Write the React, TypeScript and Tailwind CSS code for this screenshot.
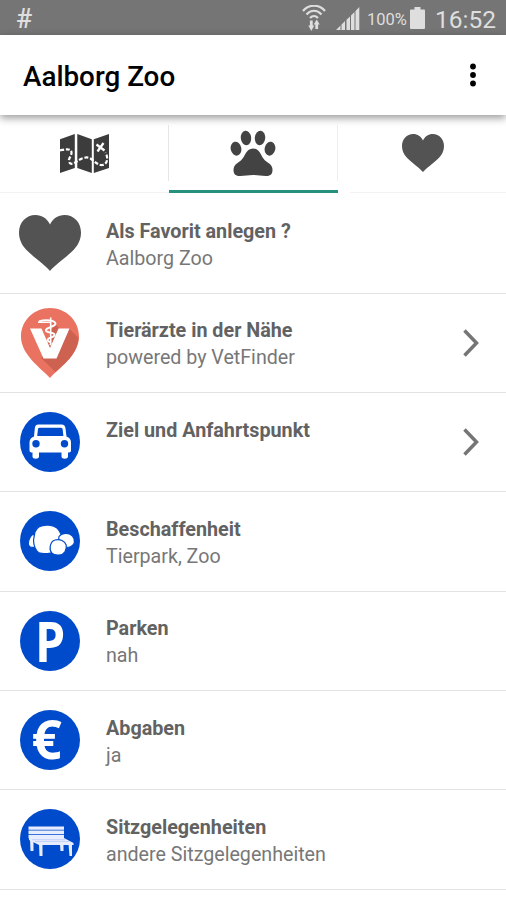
import type { ReactNode } from 'react';

type Row = {
  title: string;
  subtitle?: string;
  icon: ReactNode;
  chevron?: boolean;
};

function Heart({ className }: { className: string }) {
  return (
    <svg className={className} viewBox="0 0 62 56" preserveAspectRatio="none" fill="currentColor" aria-hidden="true">
      <path d="M31 56C27 51 14.500 42 7 34.500C2.500 29.500 0 24 0 17.500C0 7.500 7 0 16.500 0C23 0 28 3.500 31 9.500C34 3.500 39 0 45.500 0C55 0 62 7.500 62 17.500C62 24 59.500 29.500 55 34.500C47.500 42 35 51 31 56Z" />
    </svg>
  );
}

function MapIcon() {
  return (
    <svg className="h-[39px] w-[49px]" viewBox="0 0 49 39" aria-hidden="true">
      <path
        fill="#3c3c3c"
        d="M0 5.200L14.800 0V34L0 39ZM17.300 0L31.800 5.200V39L17.300 34ZM33.800 5.200L49 0V34L33.800 39Z"
      />
      <path
        d="M0 16.300C5 15.500 10 14 11.300 17.500C12.500 21.500 8 24 9 27.500C10 31.500 14 29.500 17 27.300C21 24.500 26 22 30.500 24.500C35 27.500 38 31.500 42.500 31C47.500 30 48.500 24 45.500 18.500"
        fill="none"
        stroke="#fff"
        strokeWidth="2.200"
        strokeDasharray="4 1.800"
      />
      <path d="M36.500 10.500L44.500 16.500M43.500 9L37.500 17.500" stroke="#fff" strokeWidth="2.300" />
    </svg>
  );
}

function Paw() {
  return (
    <svg className="h-[47px] w-[46px]" viewBox="0 0 46 47" fill="#434343" aria-hidden="true">
      <ellipse cx="6" cy="18.700" rx="5.300" ry="7" transform="rotate(-12 6 18.700)" />
      <ellipse cx="16" cy="8" rx="5.200" ry="7.200" transform="rotate(-6 16 8)" />
      <ellipse cx="30" cy="8" rx="5.200" ry="7.200" transform="rotate(6 30 8)" />
      <ellipse cx="40" cy="18.700" rx="5.300" ry="7" transform="rotate(12 40 18.700)" />
      <path d="M23 18.500C26.500 18.500 29 20.500 31 24.500C33.500 29.500 35.500 31 38.500 33C41.500 35 42.500 37 42.500 40C42.500 44.500 40 46 36 46C31 46 28 45 23 45C18 45 15 46 10 46C6 46 3.500 44.500 3.500 40C3.500 37 4.500 35 7.500 33C10.500 31 12.500 29.500 15 24.500C17 20.500 19.500 18.500 23 18.500Z" />
    </svg>
  );
}

function VetPin() {
  return (
    <svg className="h-[70px] w-[58px]" viewBox="0 0 58 70" aria-hidden="true">
      <path fill="#ea7260" d="M29 70C20 60 0 47 0 28.500C0 12.500 13 0 29 0S58 12.500 58 28.500C58 47 38 60 29 70Z" />
      <path fill="#cd6251" d="M48 20.500L57.500 30C56 48 42 56.500 34.500 64L20 50L25 45L32 14L40 22Z" />
      <path fill="#fff" d="M9 20.500H20.500L29 40L37.500 20.500H48.500L35.500 50.500H22.500Z" />
      <path d="M17 14.200H29M29.700 9.500V34" fill="none" stroke="#fff" strokeWidth="1.600" />
      <path
        d="M18 13.500C23 11.500 31 11.500 34 14.500C37 18.500 23 19.500 25 23C27 25 35 24.500 33.500 27.500C31 30 25 30 27 33C29 34 31 34.500 29 37"
        fill="none"
        stroke="#fff"
        strokeWidth="1.900"
      />
    </svg>
  );
}

function BlueDisc({ children }: { children: ReactNode }) {
  return (
    <svg className="size-[60px] overflow-visible" viewBox="0 0 60 60" aria-hidden="true">
      <circle cx="30" cy="30" r="30" fill="#004bcb" />
      {children}
    </svg>
  );
}

function Car() {
  return (
    <BlueDisc>
      <path
        fill="#fff"
        fillRule="evenodd"
        d="M18.500 12.500H41.500C44 12.500 45.300 14 45.500 16.500L46.500 24.500C49.500 25.500 51 27.500 51 30.500V38.500C51 40 50 40.500 48 40.500V44.500C48 47.500 41.500 47.500 41.500 44.500V40.500H19V44.500C19 47.500 12.500 47.500 12.500 44.500V40.500C10.500 40.500 9.500 40 9.500 38.500V30.500C9.500 27.500 11 25.500 14 24.500L14.800 16.500C15 14 16 12.500 18.500 12.500ZM19.500 15.800C18.500 15.800 18 16.500 17.900 17.700L17.200 24H43.400L42.700 17.700C42.500 16.500 42 15.800 41 15.800Z"
      />
      <circle cx="16" cy="31.700" r="3.700" fill="#004bcb" />
      <circle cx="44.500" cy="31.700" r="3.700" fill="#004bcb" />
    </BlueDisc>
  );
}

function Stones() {
  return (
    <BlueDisc>
      <g fill="#fff" stroke="#004bcb" strokeWidth="1.200">
        <path d="M14 23C9 25 7 33 9.500 35.500C12 37.500 15 36 17 36Z" />
        <path d="M15 21C17 15.500 22 13.700 29 14.200C37 14.700 39 18.500 41.500 24C42.500 30 40 37 35 40C30 43.500 25 42.700 19.500 42C15.500 40 13.500 34 13.500 29Z" />
        <path d="M39 25.500C42 21.500 49 21.500 52.500 25C56 29 55 34.500 49.500 36C44 37 40 34 38.500 30Z" />
        <path d="M35 29C40 27.500 45 30 46.200 34C47 39 44.500 43.700 39 44C32 44.500 29.500 40.500 30.200 35.500C31 31 33 29.500 35 29Z" />
      </g>
    </BlueDisc>
  );
}

function Bench() {
  return (
    <BlueDisc>
      <g fill="#e7edff">
        <path d="M8.500 17.500H44V20.800H8.500ZM8.500 21.600H44V24.900H8.500ZM8.500 25.700H44V29.200H8.500Z" />
        <path d="M9 29H44L53.500 34V36H19L9 31Z" />
        <path d="M10 30H13.500V42H10.500ZM19 35H22.500V47H19.500ZM40 35H43.500V42H40.500ZM48.500 35H52V47H49.500Z" />
      </g>
      <path d="M12 30.700H45M15 32.500H49" stroke="#9fb7ee" strokeWidth=".5" />
    </BlueDisc>
  );
}

function Parking() {
  return (
    <BlueDisc>
      <text
        x="18"
        y="50.500"
        transform="translate(18 0) scale(.86 1) translate(-21.500 0)"
        className="fill-white font-['Open_Sans','Noto_Sans',sans-serif] text-[56px] font-bold"
      >
        P
      </text>
    </BlueDisc>
  );
}

function Euro() {
  return (
    <BlueDisc>
      <text
        x="26.700"
        y="48.700"
        textAnchor="middle"
        className="fill-white font-['Open_Sans','Noto_Sans',sans-serif] text-[53px] font-bold"
      >
        €
      </text>
    </BlueDisc>
  );
}

const rows: Row[] = [
  { title: 'Als Favorit anlegen ?', subtitle: 'Aalborg Zoo', icon: <Heart className="h-[56px] w-[62px] text-[#535353]" /> },
  { title: 'Tierärzte in der Nähe', subtitle: 'powered by VetFinder', icon: <VetPin />, chevron: true },
  { title: 'Ziel und Anfahrtspunkt', icon: <Car />, chevron: true },
  { title: 'Beschaffenheit', subtitle: 'Tierpark, Zoo', icon: <Stones /> },
  { title: 'Parken', subtitle: 'nah', icon: <Parking /> },
  { title: 'Abgaben', subtitle: 'ja', icon: <Euro /> },
  { title: 'Sitzgelegenheiten', subtitle: 'andere Sitzgelegenheiten', icon: <Bench /> },
];

function StatusBar() {
  return (
    <div className="flex h-[35px] items-start bg-[#757575] text-[#dedede]">
      <span className="ml-4 mt-[5px] w-[286px] text-[27px] font-medium leading-7">#</span>
      <svg className="mt-[5px] h-[26px] w-6" viewBox="0 0 24 26" fill="none" stroke="currentColor" aria-hidden="true">
        <path d="M1 6C7 -1 17 -1 23 6M4.500 9.500C9 4.500 15 4.500 19.500 9.500M8 13C10.500 10.300 13.500 10.300 16 13" strokeWidth="2.200" />
        <path d="M9.300 15.500V22M14.700 18V24" strokeWidth="2.800" />
        <path fill="currentColor" stroke="none" d="M6.300 20.500H12.300L9.300 26ZM11.700 19.500H17.700L14.700 14.500Z" />
      </svg>
      <svg className="ml-[10px] mt-[7px] h-[23px] w-6" viewBox="0 0 24 23" fill="currentColor" aria-hidden="true">
        <path d="M0 23L4.500 18.500V23ZM5.500 17.500L9 14V23H5.500ZM10.500 12.800L14 9.500V23H10.500ZM15 8.500L18.500 5V23H15ZM19.500 4L23.300 0V23H19.500Z" />
      </svg>
      <span className="ml-[7px] mt-[10px] w-[43px] text-[16.500px] leading-5">100%</span>
      <svg className="mt-[7px] h-[22px] w-[15px]" viewBox="0 0 15 22" fill="currentColor" aria-hidden="true">
        <path d="M4.500 0H10.500V2.500H14Q15 2.500 15 3.500V21Q15 22 14 22H1Q0 22 0 21V3.500Q0 2.500 1 2.500H4.500Z" />
      </svg>
      <span className="ml-[10px] mt-[4px] text-[24.500px] leading-8">16:52</span>
    </div>
  );
}

function Header() {
  return (
    <header className="relative flex h-20 items-center justify-between bg-white pl-[23px] pr-[29px] shadow-[0_3px_8px_rgb(0_0_0_/_40%)]">
      <h1 className="pt-[3px] text-[27.800px] font-medium leading-8 text-black">Aalborg Zoo</h1>
      <svg className="h-6 w-2" viewBox="0 0 8 24" aria-hidden="true">
        <circle cx="4" cy="3.500" r="2.900" />
        <circle cx="4" cy="12" r="2.900" />
        <circle cx="4" cy="20.500" r="2.900" />
      </svg>
    </header>
  );
}

function Tabs() {
  return (
    <nav className="grid h-[79px] grid-cols-[169px_169px_168px] pt-[10px]">
      <div className="mb-px flex justify-center border-b border-[#f3f3f3]">
        <div className="flex h-14 w-full justify-center border-r border-[#e6e6e6] pl-px pt-[9px]">
          <MapIcon />
        </div>
      </div>
      <div className="mb-px flex justify-center border-b-[3px] border-[#26917d]">
        <div className="flex h-14 w-full justify-center border-r border-[#eeeeee] pt-[5px]">
          <Paw />
        </div>
      </div>
      <div className="mb-px ml-3 flex justify-center border-b border-[#f3f3f3] pr-[11px] pt-[9px]">
        <Heart className="h-[38px] w-[42px] text-[#535353]" />
      </div>
    </nav>
  );
}

function ListRow({ title, subtitle, icon, chevron }: Row) {
  return (
    <li className="flex h-[99.330px] border-b border-[#e3e3e3] pl-[19px] pr-[27px]">
      <div className="flex w-[62px] shrink-0 items-center justify-center">{icon}</div>
      <div className="ml-[25px] flex-1 pt-[23.800px] text-[#626262]">
        <p className="text-[19.750px] font-bold leading-[27px]">{title}</p>
        {subtitle && <p className="text-[19.650px] leading-[27px] text-[#777777]">{subtitle}</p>}
      </div>
      {chevron && (
        <svg className="h-7 w-4 self-center" viewBox="0 0 16 28" fill="none" stroke="#757575" strokeWidth="3.500" aria-hidden="true">
          <path d="M1.500 1.500L13.500 14L1.500 26.500" />
        </svg>
      )}
    </li>
  );
}

export default function App() {
  return (
    <div className="h-[900px] w-[506px] overflow-hidden bg-white font-[Roboto,sans-serif]">
      <StatusBar />
      <Header />
      <Tabs />
      <ul className="pt-[0.300px]">
        {rows.map((row) => (
          <ListRow key={row.title} {...row} />
        ))}
      </ul>
    </div>
  );
}
